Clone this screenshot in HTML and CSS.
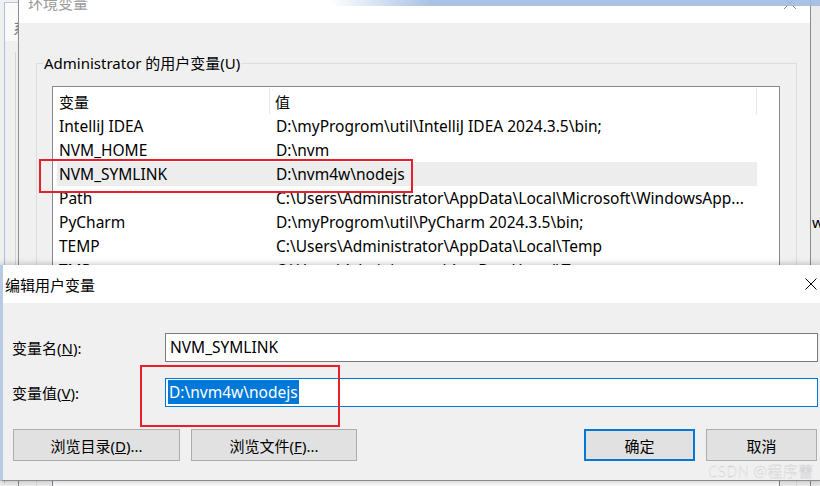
FILE: index.html
```html
<!DOCTYPE html>
<html lang="zh-CN">
<head>
    <meta charset="UTF-8">
    <meta name="viewport" content="width=device-width, initial-scale=1.0">
    <title>编辑用户变量</title>
    <link rel="stylesheet" href="styles.css">
</head>
<body>
    <!-- windows behind -->
    <div class="back-left">
        <div class="back-title">系统属性</div>
        <div class="back-panel"></div>
    </div>
    <div class="back-right"><span>w</span></div>
    <div class="top-band"></div>

    <!-- 环境变量 -->
    <div class="env-window">
        <div class="titlebar">
            <span class="title">环境变量</span>
            <svg class="close" width="14" height="14" viewBox="0 0 14 14">
                <path d="M1 1 L13 13 M13 1 L1 13" stroke="#8a8a8a" stroke-width="1" fill="none"/>
            </svg>
        </div>
        <div class="env-body">
            <fieldset class="group">
                <legend>Administrator 的用户变量(U)</legend>
                <div class="list">
                    <div class="list-head">
                        <span class="head-name">变量</span>
                        <span class="head-value">值</span>
                    </div>
                    <div class="row"><span class="col-name">IntelliJ IDEA</span><span class="col-value">D:\myProgrom\util\IntelliJ IDEA 2024.3.5\bin;</span></div>
                    <div class="row"><span class="col-name">NVM_HOME</span><span class="col-value">D:\nvm</span></div>
                    <div class="row selected"><span class="col-name">NVM_SYMLINK</span><span class="col-value">D:\nvm4w\nodejs</span></div>
                    <div class="row"><span class="col-name">Path</span><span class="col-value">C:\Users\Administrator\AppData\Local\Microsoft\WindowsApp...</span></div>
                    <div class="row"><span class="col-name">PyCharm</span><span class="col-value">D:\myProgrom\util\PyCharm 2024.3.5\bin;</span></div>
                    <div class="row"><span class="col-name">TEMP</span><span class="col-value">C:\Users\Administrator\AppData\Local\Temp</span></div>
                    <div class="row"><span class="col-name">TMP</span><span class="col-value">C:\Users\Administrator\AppData\Local\Temp</span></div>
                    <div class="row"><span class="col-name">&nbsp;</span><span class="col-value">&nbsp;</span></div>
                    <div class="row"><span class="col-name">&nbsp;</span><span class="col-value">&nbsp;</span></div>
                    <div class="row"><span class="col-name">&nbsp;</span><span class="col-value">&nbsp;</span></div>
                </div>
            </fieldset>
        </div>
    </div>

    <!-- 编辑用户变量 -->
    <div class="edit-dialog">
        <div class="dlg-titlebar">
            <span class="dlg-title">编辑用户变量</span>
            <svg class="dlg-close" width="12" height="12" viewBox="0 0 12 12">
                <path d="M0.5 0.5 L11.5 11.5 M11.5 0.5 L0.5 11.5" stroke="#000" stroke-width="1" fill="none"/>
            </svg>
        </div>
        <div class="dlg-body">
            <div class="fields">
                <label class="field-label">变量名(<u>N</u>):</label>
                <div class="textbox">NVM_SYMLINK</div>
                <label class="field-label">变量值(<u>V</u>):</label>
                <div class="textbox focused"><span class="sel">D:\nvm4w\nodejs</span></div>
            </div>
            <div class="btn-row">
                <button class="btn btn-browse">浏览目录(<u>D</u>)...</button>
                <button class="btn btn-browse2">浏览文件(<u>F</u>)...</button>
                <button class="btn btn-ok">确定</button>
                <button class="btn btn-cancel">取消</button>
            </div>
        </div>
    </div>

    <!-- annotations -->
    <div class="mark mark-row"></div>
    <div class="mark mark-value"></div>
    <div class="watermark">CSDN @程序蕾</div>
</body>
</html>
```

FILE: styles.css
```css
body {
    margin: 0;
    width: 820px;
    height: 486px;
    overflow: hidden;
    position: relative;
    background: #f0f0f0;
    font-family: "Noto Sans", "Noto Sans CJK SC", sans-serif;
    font-size: 15px;
    color: #000;
}

/* Windows behind */
.back-left {
    position: absolute;
    left: 4px;
    top: 2px;
    width: 100px;
    height: 480px;
    border-left: 1px solid #a9c0de;
    border-top: 1px solid #b7c9e2;
    background: linear-gradient(#fafafa 0, #fafafa 38px, #f0f0f0 38px);
}

.back-title {
    padding: 15px 0 0 8px;
    color: #7a7a7a;
    line-height: 20px;
}

.back-panel {
    margin: 14px 0 0 10px;
    height: 420px;
    border-left: 1px solid #d6d6d6;
}

.back-right {
    position: absolute;
    left: 811px;
    top: 0;
    width: 9px;
    height: 486px;
    overflow: hidden;
    background: #ececec;
}

.back-right span {
    display: block;
    padding: 212px 0 0 1px;
    line-height: 20px;
}

.top-band {
    position: absolute;
    left: 0;
    top: 0;
    width: 820px;
    height: 6px;
    z-index: 2;
    background: linear-gradient(to right, rgba(160, 188, 226, 0) 0, rgba(160, 188, 226, 0) 330px, rgba(160, 188, 226, 0.9) 430px);
}

/* 环境变量 window */
.env-window {
    position: absolute;
    left: 18px;
    top: -10px;
    width: 793px;
    height: 496px;
    box-sizing: border-box;
    overflow: hidden;
    background: #f0f0f0;
    border-left: 1px solid #8c8c8c;
    border-right: 1px solid #8c8c8c;
}

.titlebar {
    height: 33px;
    background: #fff;
    display: flex;
    align-items: flex-start;
    justify-content: space-between;
    padding: 0 13px 0 9px;
}

.title {
    line-height: 26px;
    color: #9b9b9b;
}

.close {
    margin-top: 6px;
}

.env-body {
    padding: 30px 13px 0 17px;
}

.group {
    margin: 0;
    padding: 0 15px;
    height: 460px;
    border: 1px solid #dcdcdc;
}

.group legend {
    margin-left: -9px;
    padding: 0 1px;
    line-height: 20px;
}

.list {
    margin-top: 13px;
    width: 728px;
    height: 430px;
    box-sizing: border-box;
    border: 1px solid #828790;
    background: #fff;
}

.list-head {
    display: flex;
    height: 27px;
    padding-top: 1px;
    box-sizing: border-box;
}

.list-head span {
    display: flex;
    align-items: center;
    border-right: 1px solid #e5e5e5;
    box-sizing: border-box;
}

.head-name {
    width: 217px;
    padding-left: 6px;
}

.head-value {
    width: 487px;
    padding-left: 5px;
}

.row {
    display: flex;
    margin-left: 4px;
    width: 700px;
    height: 24px;
    line-height: 24px;
    font-size: 15.5px;
    white-space: nowrap;
}

.row.selected {
    background: #ededed;
}

.col-name {
    width: 213px;
    padding-left: 2px;
    box-sizing: border-box;
}

.col-value {
    width: 487px;
    padding-left: 6px;
    box-sizing: border-box;
    overflow: hidden;
}

/* 编辑用户变量 dialog */
.edit-dialog {
    position: absolute;
    left: 0;
    top: 265px;
    width: 823px;
    height: 216px;
    box-sizing: border-box;
    background: #f0f0f0;
    border-left: 3px solid #b9cbe3;
    border-bottom: 1px solid #8c8c8c;
    box-shadow: 0 0 7px rgba(0, 0, 0, 0.28);
    z-index: 3;
}

.dlg-titlebar {
    height: 38px;
    background: #fff;
    display: flex;
    align-items: center;
    justify-content: space-between;
    padding: 0 6px 0 2px;
}

.dlg-body {
    padding: 30px 5px 0 9px;
}

.fields {
    display: grid;
    grid-template-columns: 153px 1fr;
    row-gap: 16px;
}

.field-label {
    display: flex;
    align-items: center;
}

.textbox {
    height: 29px;
    box-sizing: border-box;
    border: 1px solid #7a7a7a;
    background: #fff;
    padding-left: 4px;
    line-height: 27px;
    font-size: 15.5px;
}

.textbox.focused {
    border-color: #0078d7;
    padding-left: 2px;
}

.sel {
    background: #0078d7;
    color: #fff;
    padding: 1px 1px;
    line-height: 18px;
}

.btn-row {
    display: flex;
    gap: 11px;
    margin: 22px 1px 0 1px;
}

.btn {
    height: 32px;
    font: inherit;
    color: #000;
    background: #e1e1e1;
    border: 1px solid #adadad;
    padding: 0;
}

.btn-browse {
    width: 167px;
}

.btn-browse2 {
    width: 166px;
}

.btn-ok {
    width: 111px;
    margin-left: auto;
    border: 2px solid #0078d7;
}

.btn-cancel {
    width: 111px;
}

/* annotations */
.mark {
    position: absolute;
    box-sizing: border-box;
    border: 2px solid #e5202a;
    z-index: 4;
}

.mark-row {
    left: 39px;
    top: 159px;
    width: 374px;
    height: 34px;
}

.mark-value {
    left: 140px;
    top: 365px;
    width: 200px;
    height: 62px;
}

.watermark {
    position: absolute;
    left: 708px;
    top: 460px;
    z-index: 5;
    font-size: 15px;
    font-weight: 300;
    color: rgba(255, 255, 255, 0.6);
    -webkit-text-stroke: 0.3px rgba(170, 170, 170, 0.6);
    letter-spacing: 0.5px;
}
```
